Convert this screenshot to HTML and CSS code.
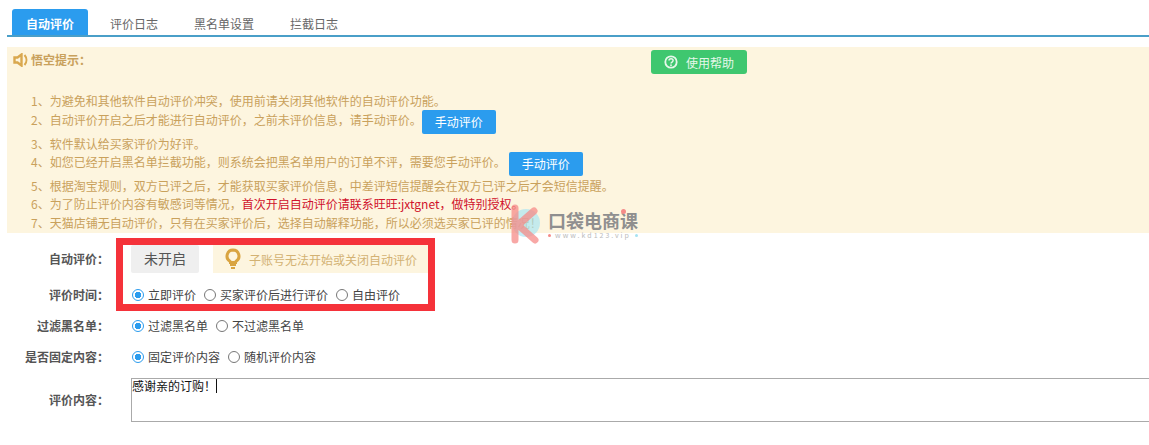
FILE: index.html
```html
<!doctype html>
<html>

<head>
    <meta charset="UTF-8">
    <title>自动评价</title>
    <link rel="stylesheet" href="styles.css">
</head>

<body>
<div class="tabs">
    <a class="tab active">自动评价</a>
    <a class="tab">评价日志</a>
    <a class="tab">黑名单设置</a>
    <a class="tab">拦截日志</a>
</div>

<div class="notice">
    <div class="noticeHead">
        <div class="noticeTitle">
            <svg class="speaker" width="15" height="14" viewBox="0 0 15 14">
                <path d="M1.5 4.5h3l4-3v11l-4-3h-3z" fill="none" stroke="#d9a84f" stroke-width="2.4"/>
                <path d="M11.5 2c2.6 3 2.6 7 0 10" fill="none" stroke="#d9a84f" stroke-width="2"/>
            </svg>
            悟空提示：
        </div>
        <a class="helpBtn">
            <svg width="14" height="14" viewBox="0 0 14 14">
                <circle cx="7" cy="7" r="5.7" fill="none" stroke="#e6f7ea" stroke-width="1.8"/>
                <path d="M5 5.6c0-2.4 4.1-2.4 4.1 0 0 1.5-2.1 1.4-2.1 2.9" fill="none" stroke="#e6f7ea" stroke-width="1.5"/>
                <circle cx="7" cy="10.2" r=".9" fill="#e6f7ea"/>
            </svg>
            使用帮助
        </a>
    </div>
    <ol class="tips">
        <li class="tip">1、为避免和其他软件自动评价冲突，使用前请关闭其他软件的自动评价功能。</li>
        <li class="tip hasBtn">2、自动评价开启之后才能进行自动评价，之前未评价信息，请手动评价。<a class="manualBtn">手动评价</a></li>
        <li class="tip tight">3、软件默认给买家评价为好评。</li>
        <li class="tip hasBtn">4、如您已经开启黑名单拦截功能，则系统会把黑名单用户的订单不评，需要您手动评价。<a class="manualBtn wide">手动评价</a></li>
        <li class="tip tight">5、根据淘宝规则，双方已评之后，才能获取买家评价信息，中差评短信提醒会在双方已评之后才会短信提醒。</li>
        <li class="tip">6、为了防止评价内容有敏感词等情况，<span class="red">首次开启自动评价请联系旺旺:jxtgnet，做特别授权。</span></li>
        <li class="tip">7、天猫店铺无自动评价，只有在买家评价后，选择自动解释功能，所以必须选买家已评的情况！</li>
    </ol>
</div>

<div class="form">
    <div class="row firstRow">
        <div class="label">自动评价：</div>
        <div class="ctrl">
            <a class="stateBtn">未开启</a>
            <div class="hint">
                <svg width="16" height="22" viewBox="0 0 16 22">
                    <path d="M8 2a6 6 0 0 0-3.4 10.9c.6.5.9 1 .9 1.6h5c0-.6.3-1.1.9-1.6A6 6 0 0 0 8 2z" fill="none" stroke="#d9a441" stroke-width="3"/>
                    <path d="M5 17h6M6 20h4" stroke="#d9a441" stroke-width="2"/>
                </svg>
                子账号无法开始或关闭自动评价
            </div>
        </div>
    </div>
    <div class="row timeRow">
        <div class="label">评价时间：</div>
        <div class="ctrl">
            <span class="radio on"></span><span class="opt">立即评价</span>
            <span class="radio"></span><span class="opt">买家评价后进行评价</span>
            <span class="radio"></span><span class="opt">自由评价</span>
        </div>
    </div>
    <div class="row">
        <div class="label">过滤黑名单：</div>
        <div class="ctrl">
            <span class="radio on"></span><span class="opt">过滤黑名单</span>
            <span class="radio"></span><span class="opt">不过滤黑名单</span>
        </div>
    </div>
    <div class="row">
        <div class="label">是否固定内容：</div>
        <div class="ctrl">
            <span class="radio on"></span><span class="opt">固定评价内容</span>
            <span class="radio"></span><span class="opt">随机评价内容</span>
        </div>
    </div>
    <div class="row contentRow">
        <div class="label">评价内容：</div>
        <div class="textBox">感谢亲的订购！<span class="caret"></span></div>
    </div>
</div>

<div class="redBox"></div>

<div class="mark">
    <svg width="32" height="40" viewBox="0 0 32 40">
        <circle cx="17" cy="19" r="14" fill="#a6e3f2" fill-opacity=".65"/>
        <path d="M6 4v32M25 7L9 21l17 15" fill="none" stroke="#f58b88" stroke-opacity=".75" stroke-width="7" stroke-linecap="round" stroke-linejoin="round"/>
    </svg>
    <div class="markText">
        <div class="markName">口袋电商课<span class="markDot"></span></div>
        <div class="markUrl"><i class="urlDot pink"></i>www.kd123.vip<i class="urlDot blue"></i></div>
    </div>
</div>
</body>

</html>
```

FILE: styles.css
```css
html, body {
    height: 445px;
    overflow: hidden;
}

body {
    margin: 0;
    background-color: #fff;
    font-family: "Noto Sans CJK SC", "Liberation Sans", sans-serif;
    font-size: 12px;
    color: #333;
    position: relative;
}

.tabs {
    display: flex;
    margin: 9px 0 0 7px;
    padding-left: 5px;
    border-bottom: 2px solid #4a9fc8;
    height: 26px;
}

.tab {
    line-height: 29px;
    color: #666;
    margin-right: 36px;
}

.tab.active {
    width: 76px;
    margin-right: 22px;
    text-align: center;
    background-color: #2b9cee;
    color: #fff;
    font-weight: bold;
    border-radius: 3px 3px 0 0;
}

.notice {
    margin: 10px 0 0 7px;
    height: 186px;
    background-color: #fdf5df;
    color: #c9a15c;
}

.noticeHead {
    display: flex;
    height: 44px;
    padding-top: 3px;
    box-sizing: border-box;
}

.noticeTitle {
    width: 644px;
    padding: 0 0 0 6px;
    box-sizing: border-box;
    line-height: 20px;
    font-weight: bold;
    display: flex;
    align-items: center;
    height: 20px;
    gap: 3px;
}

.helpBtn {
    display: flex;
    align-items: center;
    justify-content: center;
    gap: 8px;
    width: 96px;
    height: 24px;
    background-color: #3fc76f;
    border-radius: 3px;
    color: #e6f7ea;
}

.tips {
    list-style: none;
    margin: 0;
    padding: 0 0 0 24px;
}

.tip {
    height: 19px;
    line-height: 19px;
    white-space: nowrap;
}

.tip.hasBtn {
    display: flex;
    align-items: flex-start;
    height: 24px;
}

.tip.tight {
    margin-bottom: -1px;
}

.red {
    color: #d0112b;
}

.manualBtn {
    display: block;
    width: 74px;
    height: 24px;
    line-height: 24px;
    text-align: center;
    background-color: #2b9cee;
    border-radius: 2px;
    color: #fff;
}

.manualBtn.wide {
    margin-left: 3px;
}

.form {
    padding-top: 12px;
}

.row {
    display: flex;
    align-items: center;
    height: 31px;
}

.firstRow {
    height: 28px;
}

.timeRow {
    margin-top: 6px;
    height: 31px;
}

.label {
    width: 109px;
    padding-bottom: 1px;
    text-align: right;
    font-weight: bold;
    color: #555;
    flex-shrink: 0;
}

.ctrl {
    display: flex;
    align-items: center;
    margin-left: 22px;
}

.stateBtn {
    width: 68px;
    height: 28px;
    line-height: 27px;
    text-align: center;
    background-color: #efefef;
    border-radius: 2px;
    font-size: 14px;
    color: #555;
}

.hint {
    display: flex;
    align-items: center;
    gap: 8px;
    width: 215px;
    height: 28px;
    margin-left: 14px;
    padding-left: 12px;
    box-sizing: border-box;
    background-color: #fdf5df;
    color: #d3b273;
    white-space: nowrap;
}

.radio {
    width: 12px;
    height: 12px;
    margin-left: 1px;
    box-sizing: border-box;
    border: 1px solid #777;
    border-radius: 50%;
    flex-shrink: 0;
}

.radio.on {
    border-color: #2b9cee;
    background: radial-gradient(circle, #2b9cee 0 3px, #fff 3.5px);
}

.opt {
    margin: 0 7px 0 4px;
    color: #444;
}

.contentRow {
    height: 44px;
    margin-top: 6px;
}

.textBox {
    margin-left: 22px;
    flex: 1;
    height: 44px;
    box-sizing: border-box;
    border: 1px solid #aaa;
    border-right: none;
    line-height: 14px;
    color: #111;
}

.caret {
    display: inline-block;
    width: 1px;
    height: 14px;
    background-color: #111;
    vertical-align: top;
}

.redBox {
    position: absolute;
    left: 116px;
    top: 238px;
    width: 319px;
    height: 73px;
    box-sizing: border-box;
    border: 7px solid #f5323a;
}

.mark {
    position: absolute;
    left: 509px;
    top: 204px;
    display: flex;
    align-items: center;
    gap: 7px;
}

.markName {
    position: relative;
    font-size: 18px;
    line-height: 22px;
    font-weight: bold;
    color: #8f8f8f;
    white-space: nowrap;
}

.markDot {
    position: absolute;
    left: 73px;
    top: 0;
    width: 5px;
    height: 5px;
    border-radius: 50%;
    background-color: #f58b88;
}

.markUrl {
    display: flex;
    align-items: center;
    justify-content: space-between;
    font-size: 7px;
    line-height: 9px;
    letter-spacing: 2px;
    color: #bbb;
}

.urlDot {
    width: 3px;
    height: 3px;
    border-radius: 50%;
}

.urlDot.pink {
    background-color: #f58b88;
}

.urlDot.blue {
    background-color: #a6e3f2;
}
```
